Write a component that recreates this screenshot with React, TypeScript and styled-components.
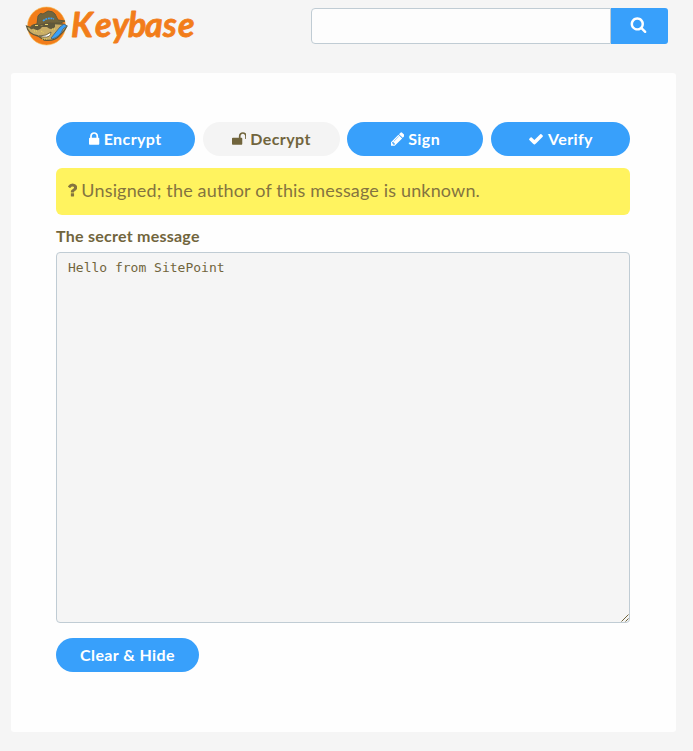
import React from "react";
import styled, { createGlobalStyle } from "styled-components";

const BLUE = "#38a0fb";
const BROWN = "#71653d";
const ORANGE = "#f27d1a";

const GlobalStyle = createGlobalStyle`
  * { box-sizing: border-box; }
  body { margin: 0; background: #f5f5f5; color: ${BROWN}; font-family: Lato, sans-serif; overflow: hidden; }
`;

const Page = styled.div`
  height: 751px;
  background: #f5f5f5;
`;

const Header = styled.header`
  display: flex;
  justify-content: space-between;
  align-items: flex-start;
  height: 73px;
  padding: 0 25px 0 22px;
`;

const Logo = styled.a`
  display: block;
  width: 180px;
  height: 54px;
  svg { display: block; }
`;

const LogoText = styled.text`
  font-family: Lato, sans-serif;
  font-size: 34px;
  font-style: italic;
  font-weight: 700;
  fill: ${ORANGE};
  stroke: ${ORANGE};
  stroke-width: 0.8px;
  stroke-linejoin: round;
`;

const SearchForm = styled.div`
  display: flex;
  width: 357px;
  height: 36px;
  margin-top: 8px;
`;

const SearchInput = styled.input`
  flex: 1;
  min-width: 0;
  border: 1px solid #c0ccd4;
  border-radius: 4px 0 0 4px;
  background: #fdfdfd;
  outline: none;
`;

const SearchButton = styled.button`
  display: flex;
  align-items: center;
  justify-content: center;
  width: 57px;
  padding: 0 2px 3px 0;
  border: 0;
  border-radius: 0 3px 3px 0;
  background: ${BLUE};
  color: #fff;
`;

const Card = styled.main`
  width: 665px;
  height: 659px;
  margin-left: 11px;
  padding: 49px 46px 0 45px;
  border-radius: 3px;
  background: #fefefe;
`;

const Tabs = styled.nav`
  display: grid;
  grid-template-columns: 139px 137px 136px 139px;
  justify-content: space-between;
`;

const Pill = styled.button<{ $muted?: boolean; $width?: number }>`
  display: flex;
  align-items: center;
  justify-content: center;
  gap: 4px;
  height: 34px;
  width: ${(p) => (p.$width ? `${p.$width}px` : "auto")};
  padding: 0 0 1px;
  border: 0;
  border-radius: 17px;
  background: ${(p) => (p.$muted ? "#f4f4f4" : BLUE)};
  color: ${(p) => (p.$muted ? BROWN : "#fff")};
  font: 700 16px/20px Lato, sans-serif;
  letter-spacing: 0.4px;
  white-space: nowrap;
`;

const Notice = styled.div`
  display: flex;
  align-items: center;
  gap: 4px;
  height: 47px;
  margin-top: 12px;
  padding: 0 11px 3px;
  border-radius: 6px;
  background: #fff35f;
  color: #84743f;
  font-size: 18px;
  letter-spacing: 0.16px;
`;

const Label = styled.label`
  display: block;
  height: 37px;
  padding-top: 11px;
  font-size: 16px;
  font-weight: 700;
  line-height: 20px;
  letter-spacing: 0.25px;
`;

const MessageFrame = styled.div`
  position: relative;
  height: 371px;
`;

const Message = styled.textarea`
  display: block;
  width: 100%;
  height: 100%;
  padding: 6px 11px;
  border: 1px solid #c0ccd4;
  border-radius: 4px;
  background: #f5f5f5;
  color: ${BROWN};
  font: 13px/18px "DejaVu Sans Mono", monospace;
  resize: none;
  outline: none;
`;

const Grip = styled.svg`
  position: absolute;
  right: 1px;
  bottom: 1px;
`;

const Actions = styled.div`
  padding-top: 15px;
`;

const icons = {
  lock: "M640 768h512v-192q0-106-75-181t-181-75-181 75-75 181v192zm832 96v576q0 40-28 68t-68 28h-960q-40 0-68-28t-28-68v-576q0-40 28-68t68-28h32v-192q0-184 132-316t316-132 316 132 132 316v192h32q40 0 68 28t28 68z",
  unlock: "M1664 576v256q0 26-19 45t-45 19h-64q-26 0-45-19t-19-45v-256q0-106-75-181t-181-75-181 75-75 181v192h96q40 0 68 28t28 68v576q0 40-28 68t-68 28h-960q-40 0-68-28t-28-68v-576q0-40 28-68t68-28h672v-192q0-185 131.5-316.5t316.5-131.5 316.5 131.5 131.5 316.5z",
  pencil: "M491 1536l91-91-235-235-91 91v107h128v128h107zm523-928q0-22-22-22-10 0-17 7l-542 542q-7 7-7 17 0 22 22 22 10 0 17-7l542-542q7-7 7-17zm-54-192l416 416-832 832h-416v-416zm683 96q0 53-37 90l-166 166-416-416 166-165q36-38 90-38 53 0 91 38l235 234q37 39 37 91z",
  check: "M1671 566q0 40-28 68l-724 724-136 136q-28 28-68 28t-68-28l-136-136-362-362q-28-28-28-68t28-68l136-136q28-28 68-28t68 28l294 295 656-657q28-28 68-28t68 28l136 136q28 28 28 68z",
  search: "M1216 832q0-185-131.5-316.5t-316.5-131.5-316.5 131.5-131.5 316.5 131.5 316.5 316.5 131.5 316.5-131.5 131.5-316.5zm512 832q0 52-38 90t-90 38q-54 0-90-38l-343-342q-179 124-399 124-143 0-273.5-55.5t-225-150-150-225-55.5-273.5 55.5-273.5 150-225 225-150 273.5-55.5 273.5 55.5 225 150 150 225 55.5 273.5q0 220-124 399l343 343q37 37 37 90z",
  question: "M1088 1256v240q0 16-12 28t-28 12h-240q-16 0-28-12t-12-28v-240q0-16 12-28t28-12h240q16 0 28 12t12 28zm316-600q0 54-15.5 101t-35 76.5-55 59.5-57.5 43.5-61 35.5q-41 23-68.5 65t-27.5 67q0 17-12 32.5t-28 15.5h-240q-15 0-25.5-18.5t-10.5-37.5v-45q0-83 65-156.5t143-108.5q59-27 84-56t25-76q0-42-46.5-74t-107.5-32q-65 0-108 29-35 25-107 115-13 16-31 16-12 0-25-8l-164-125q-13-10-15.5-25t5.5-28q160-266 464-266 80 0 161 31t146 83 106 127.5 41 158.5z",
};

interface IconProps {
  name: keyof typeof icons;
  size?: number;
  x?: number;
  w?: number;
}

function Icon({ name, size = 16, x = 0, w = 1792 }: IconProps) {
  return (
    <svg width={(size * w) / 1792} height={size} viewBox={`${x} 0 ${w} 1792`} fill="currentColor" aria-hidden="true">
      <path d={icons[name]} />
    </svg>
  );
}

function KeybaseLogo() {
  return (
    <svg width="180" height="54" viewBox="22 0 180 54">
      <circle cx="46.5" cy="26" r="19" fill={ORANGE} stroke="#f6bc50" strokeWidth=".6" />
      <path d="M26.5 26 L32 28 Q44 22 62 24 L67 26 Q65 31 60 35 Q54 42 44 40 L38 36 Q28 34 26.5 26Z" fill="#c9ad67" stroke="#5f583b" strokeWidth="1.3" />
      <path d="M37 24 L38 16 Q40 12 43 14 L48 11 Q53 11 55 14 L58 20 L65 21 Q60 24 56 23 Q44 21 31 29 Q29 25 37 24Z" fill={BROWN} stroke="#5f583b" />
      <path d="M43 21 Q48 17 54 19" fill="none" stroke={BLUE} strokeWidth="1.6" strokeDasharray="2 .7" />
      <path d="M31 27 Q37 23 41 26 L46 24 L55 23 L55 27 Q51 31 47 27 L42 27 Q39 32 34 29Z" fill="#5f583b" />
      <path d="M35 25.5h3M45 24.5h3" stroke="#e5d36e" strokeWidth="1.2" />
      <path d="M39 36 Q47 36 51 32 Q51 38 43 37Z" fill="#fff" stroke="#5f583b" strokeWidth=".8" />
      <path d="M34 31h4M41 31l3 2M52 29h4M42 39h5" stroke="#eddb5c" strokeDasharray="1 1" />
      <path d="M52 39 Q60 37 63 29 L67 26 L64 24 L60 27 L51 38Z" fill={BLUE} stroke="#526d7e" strokeWidth="1" />
      <LogoText x="71 95 112 128 145 163 178" y="37">Keybase</LogoText>
    </svg>
  );
}

export default function App() {
  return (
    <Page>
      <GlobalStyle />
      <Header>
        <Logo aria-label="Keybase">
          <KeybaseLogo />
        </Logo>
        <SearchForm>
          <SearchInput aria-label="Search" />
          <SearchButton aria-label="Search">
            <Icon name="search" size={17} />
          </SearchButton>
        </SearchForm>
      </Header>
      <Card>
        <Tabs>
          <Pill><Icon name="lock" x={320} w={1152} />Encrypt</Pill>
          <Pill $muted><Icon name="unlock" w={1664} />Decrypt</Pill>
          <Pill><Icon name="pencil" x={128} w={1536} />Sign</Pill>
          <Pill><Icon name="check" />Verify</Pill>
        </Tabs>
        <Notice>
          <Icon name="question" size={18} x={384} w={1030} />
          <span>Unsigned; the author of this message is unknown.</span>
        </Notice>
        <Label htmlFor="message">The secret message</Label>
        <MessageFrame>
          <Message id="message" defaultValue="Hello from SitePoint" spellCheck={false} />
          <Grip width="8" height="8" viewBox="0 0 8 8" fill="none" stroke={BROWN}>
            <path d="M.5 7.5l7-7M4.5 7.5l3-3" />
          </Grip>
        </MessageFrame>
        <Actions>
          <Pill $width={143}>Clear &amp; Hide</Pill>
        </Actions>
      </Card>
    </Page>
  );
}
